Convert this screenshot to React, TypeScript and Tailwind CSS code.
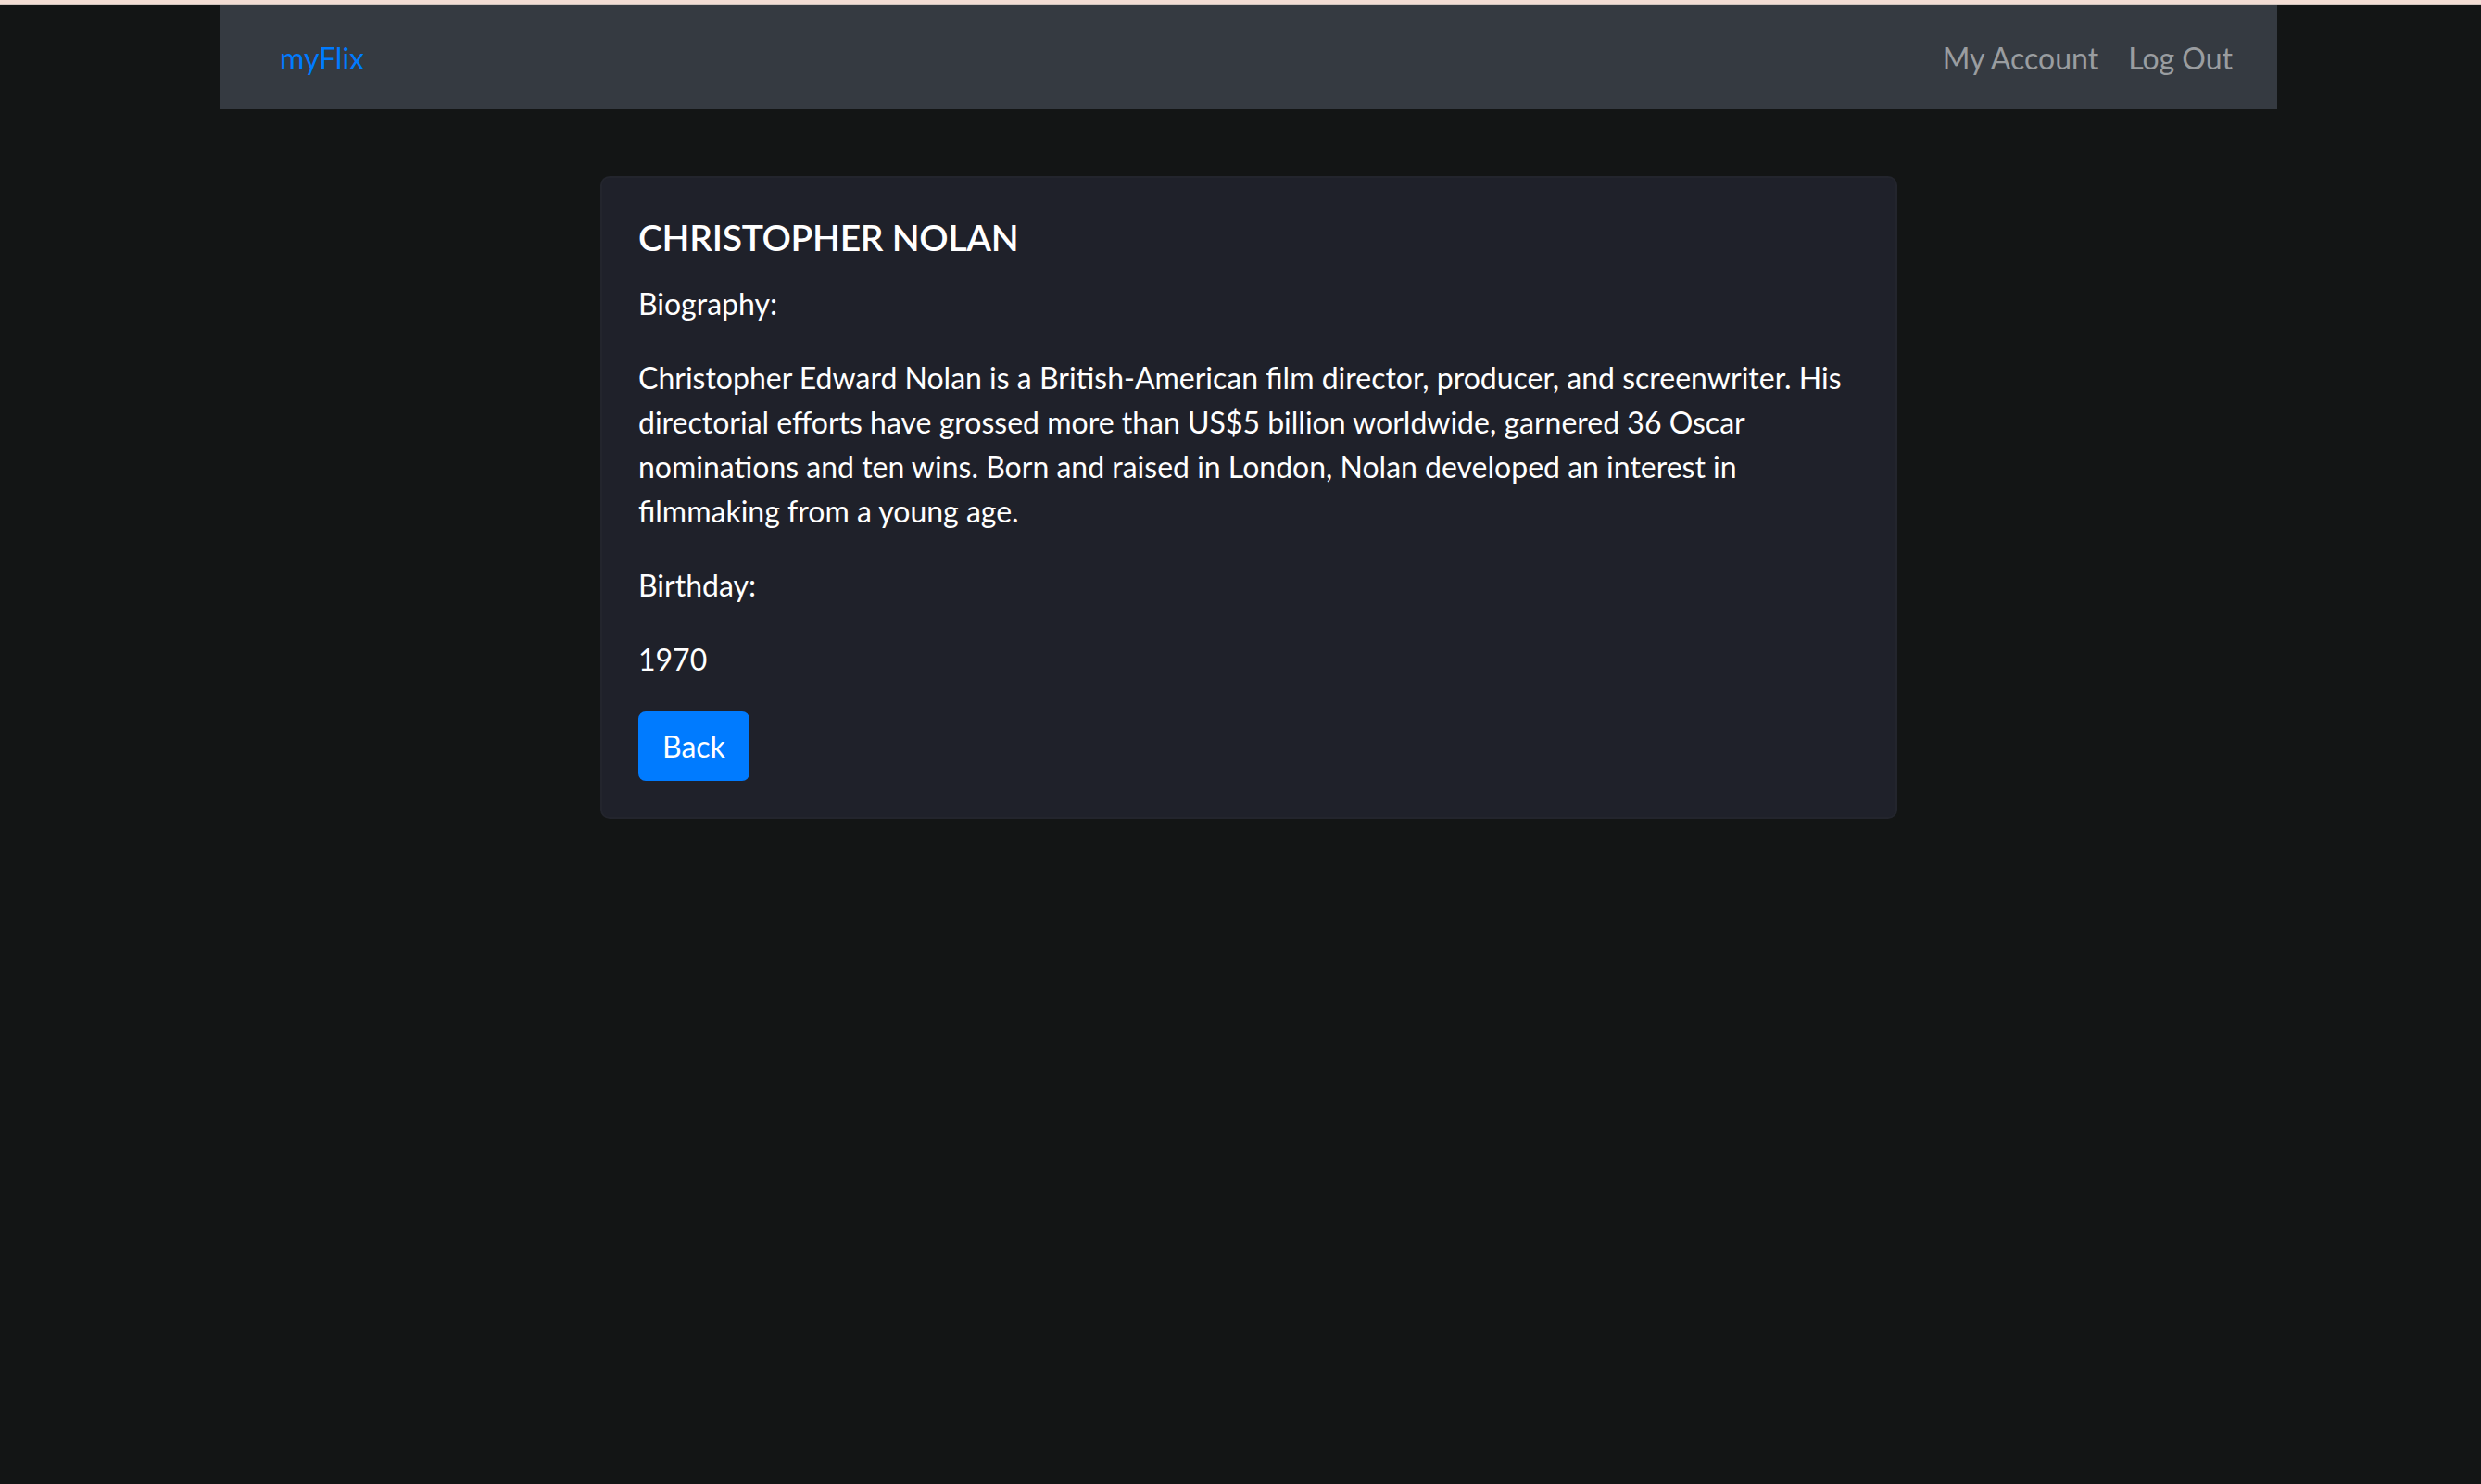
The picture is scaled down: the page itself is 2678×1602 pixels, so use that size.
export default function App() {
  const font = { fontFamily: '"Segoe UI", Lato, "Noto Sans", sans-serif' };
  return (
    <div className="min-h-[1602px] bg-[#131515] text-white" style={font}>
      <div className="h-[4px] bg-[#f3ddd4]" />
      <div className="h-px bg-[#cfc3bd]" />
      <div className="pl-[18px]">
        {/* Navbar */}
        <nav className="mx-auto flex h-[113px] w-[2220px] items-center justify-between bg-[#353a41] pl-[64px] pr-[48px] pt-[3px]">
          <a href="#" className="text-[32px] leading-[48px] text-[#007bff]">
            myFlix
          </a>
          <div className="flex items-center gap-[32px] text-[32px] leading-[48px] text-[#9a9da0]">
            <a href="#">My Account</a>
            <a href="#">Log Out</a>
          </div>
        </nav>

        {/* Director card */}
        <div className="mx-auto mt-[72px] w-[1400px] rounded-[10px] border-2 border-[#23252d] bg-[#1f212a] px-[39px] pt-[40px] pb-[39px]">
          <h5 className="mb-[24px] text-[39px] font-semibold leading-[48px] tracking-[-0.3px]">CHRISTOPHER NOLAN</h5>
          <p className="mb-[32px] text-[32px] leading-[48px]">Biography:</p>
          <p className="mb-[32px] text-[32px] leading-[48px]">
            Christopher Edward Nolan is a British-American film director, producer, and screenwriter. His
            directorial efforts have grossed more than US$5 billion worldwide, garnered 36 Oscar
            nominations and ten wins. Born and raised in London, Nolan developed an interest in
            filmmaking from a young age.
          </p>
          <p className="mb-[32px] text-[32px] leading-[48px]">Birthday:</p>
          <p className="mb-[32px] text-[32px] leading-[48px]">1970</p>
          <button className="h-[75px] rounded-[8px] border-2 border-[#007bff] bg-[#007bff] px-[24px] text-[32px] leading-[48px] text-white">
            Back
          </button>
        </div>
      </div>
    </div>
  );
}
